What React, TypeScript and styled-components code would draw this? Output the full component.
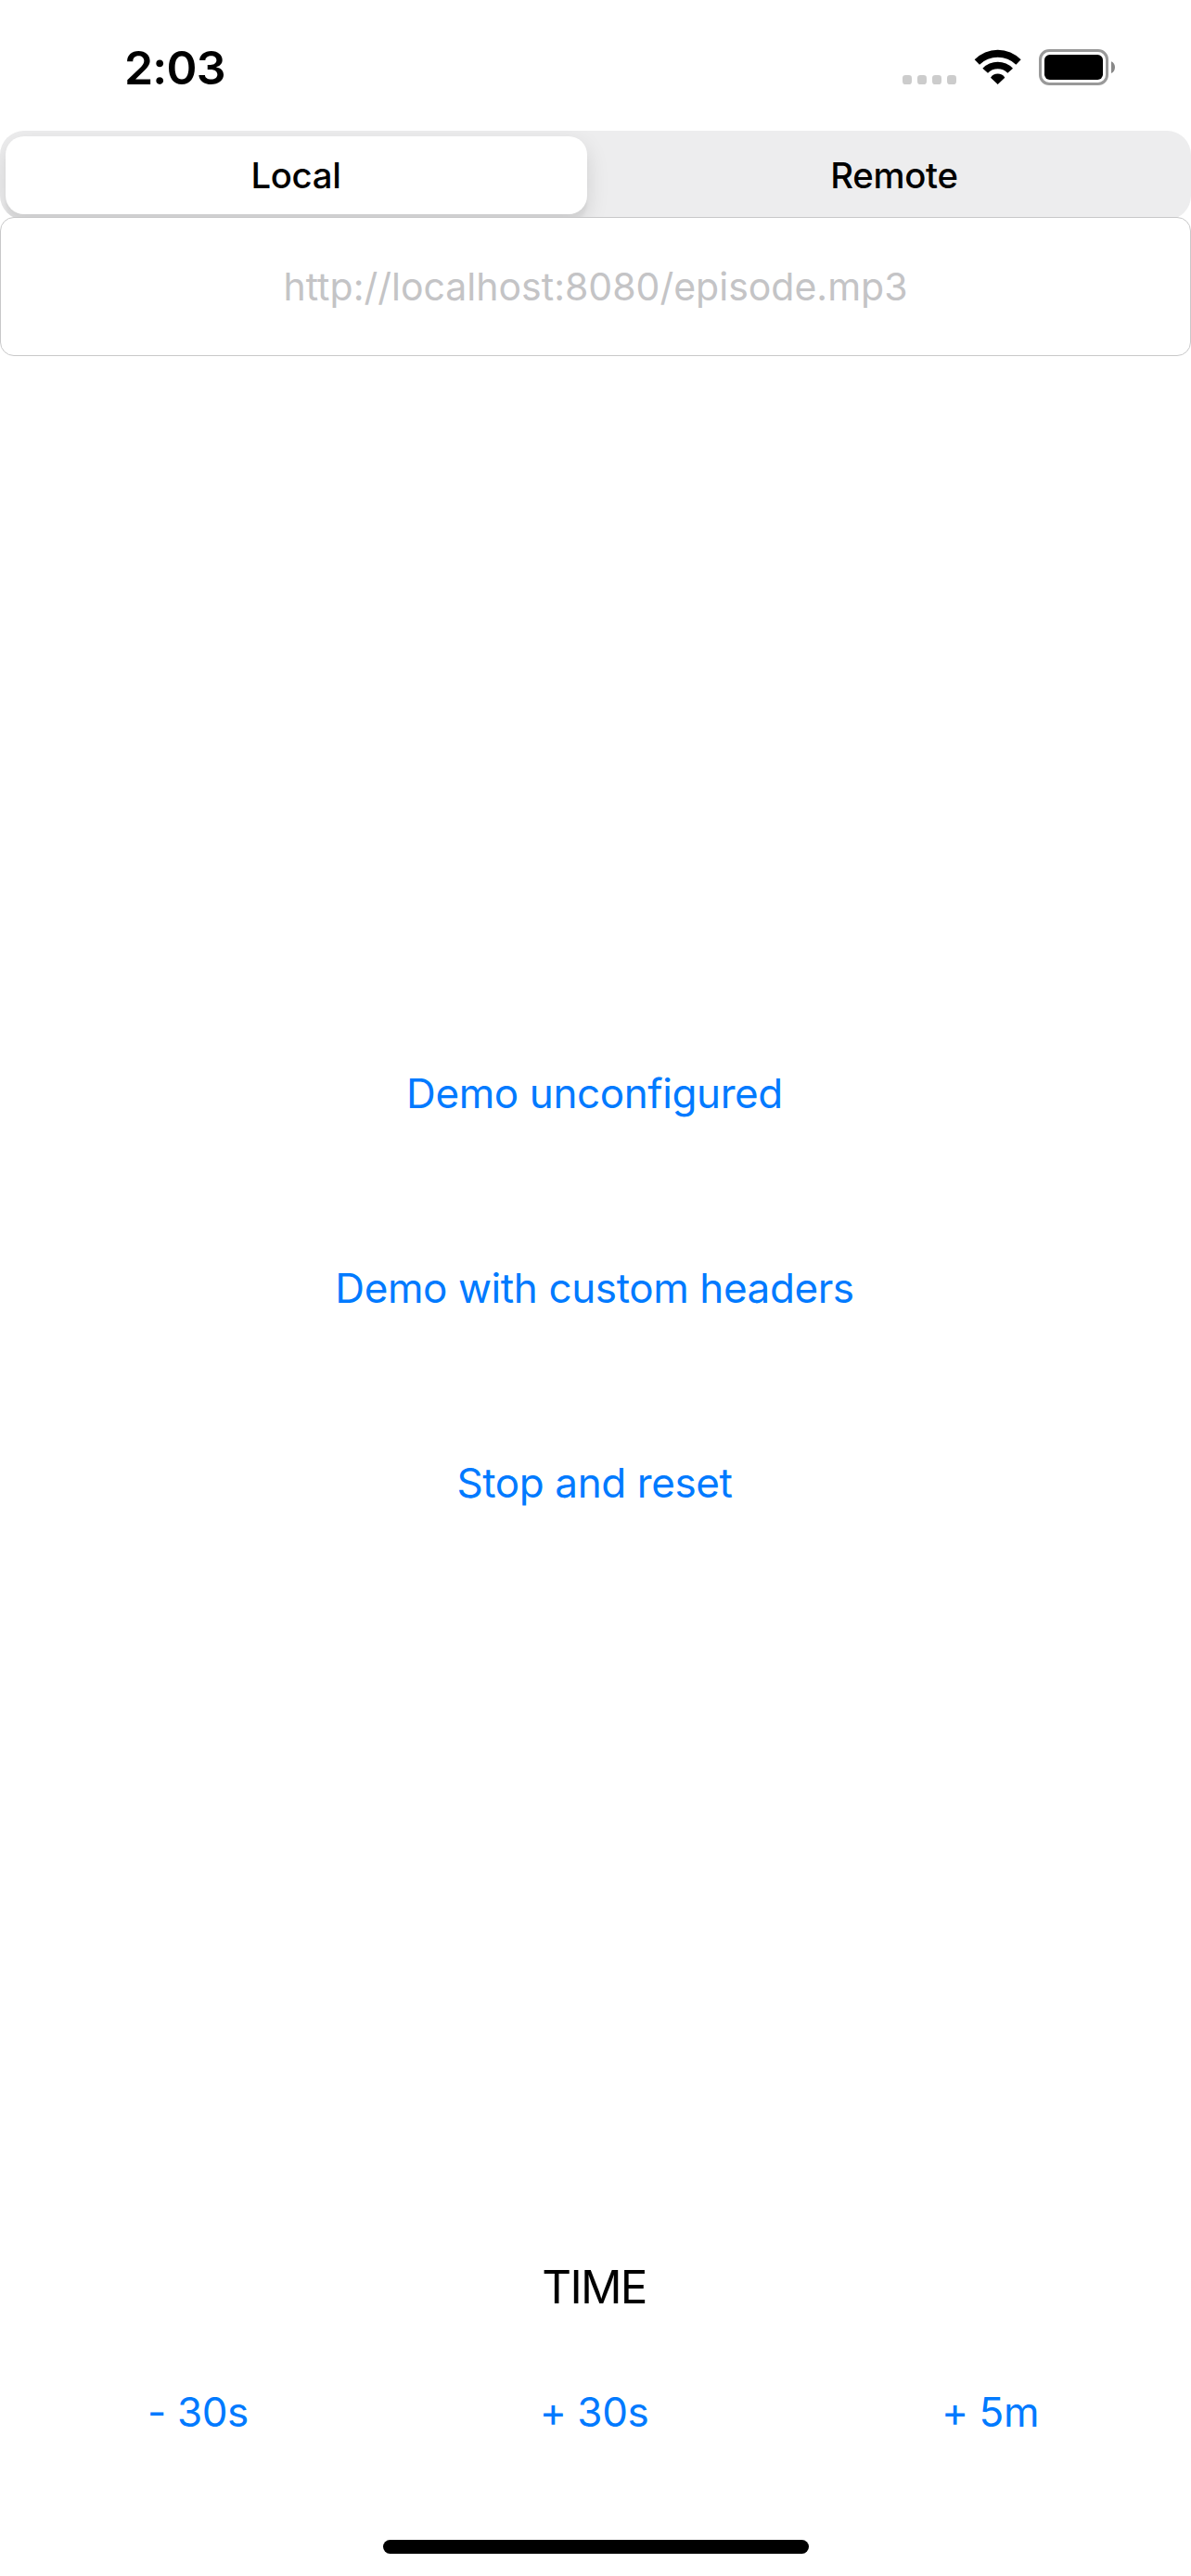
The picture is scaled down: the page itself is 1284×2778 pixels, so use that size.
import React from 'react';
import styled, { createGlobalStyle } from 'styled-components';

const fontStack = 'Inter, "Liberation Sans", sans-serif';

const Global = createGlobalStyle`
  * { box-sizing: border-box; }
  body { margin: 0; background: #fff; font-family: ${fontStack}; }
`;

const Screen = styled.main`
  width: 1284px;
  height: 2778px;
  display: flex;
  flex-direction: column;
  background: #fff;
  overflow: hidden;
`;

const StatusBar = styled.header`
  height: 141px;
  flex: none;
  display: flex;
  justify-content: space-between;
  padding: 0 80px 0 134px;
`;

const Clock = styled.div`
  padding-top: 43px;
  font-size: 50px;
  font-weight: 600;
  line-height: 61px;
  letter-spacing: -0.8px;
`;

const StatusIcons = styled.svg`
  width: 234px;
  height: 45px;
  margin-top: 50px;
`;

const Segments = styled.div`
  height: 96px;
  flex: none;
  display: flex;
  gap: 18px;
  padding: 6px;
  border-radius: 26px;
  background: #ededee;
  overflow: hidden;
`;

const Segment = styled.button<{ $selected?: boolean }>`
  flex: 1;
  padding: 0 1px 0 0;
  border: 0;
  border-radius: 20px;
  background: ${p => (p.$selected ? '#fff' : 'transparent')};
  box-shadow: ${p => (p.$selected ? '0 9px 24px rgba(0,0,0,.12), 0 9px 3px rgba(0,0,0,.04)' : 'none')};
  color: #000;
  font: 500 38.3px ${fontStack};
  letter-spacing: -0.3px;
`;

const UrlField = styled.input`
  position: relative;
  width: 100%;
  height: 150px;
  flex: none;
  margin-top: -3px;
  border: 1px solid #c8c8c9;
  border-radius: 15px;
  background: #fff;
  text-align: center;
  font: 400 41px ${fontStack};
  &::placeholder { color: #c4c4c6; opacity: 1; }
`;

const Actions = styled.section`
  display: flex;
  flex-direction: column;
  align-items: center;
  gap: 110px;
  padding: 745px 2px 0 0;
`;

const TextButton = styled.button`
  height: 100px;
  padding: 0;
  border: 0;
  background: none;
  color: #007aff;
  font: 400 44px ${fontStack};
  letter-spacing: -0.4px;
`;

const Time = styled.div`
  margin-top: auto;
  padding-right: 3px;
  text-align: center;
  font-size: 49.3px;
  line-height: 60px;
  letter-spacing: -1.7px;
`;

const SeekBar = styled.nav`
  display: grid;
  grid-template-columns: repeat(3, 1fr);
  padding: 55px 3px 0 0;
`;

const HomeIndicator = styled.div`
  width: 459px;
  height: 15px;
  flex: none;
  margin: 88px auto 24px;
  border-radius: 8px;
  background: #000;
`;

export default function App() {
  return (
    <>
      <Global />
      <Screen>
        <StatusBar>
          <Clock>2:03</Clock>
          <StatusIcons viewBox="60 60 702 135" aria-hidden="true">
            {[69, 117, 165, 213].map(x => (
              <rect key={x} x={x} y="153" width="30" height="30" rx="10" fill="#ccc" />
            ))}
            <path d="M302 103A104 104 0 0 1 452 103L436 119A85 85 0 0 0 318 119Z" />
            <path d="M328 131A68 68 0 0 1 426 131L409 146A46 46 0 0 0 345 146Z" />
            <path d="M354 161A27 27 0 0 1 400 161L377 183Z" />
            <rect x="514.5" y="73.5" width="216" height="108" rx="29" fill="none" stroke="#999" strokeWidth="9" />
            <rect x="528" y="87" width="189" height="81" rx="17" />
            <path d="M744 109C760 115 760 141 744 147Z" fill="#888" />
          </StatusIcons>
        </StatusBar>
        <Segments>
          <Segment $selected>Local</Segment>
          <Segment>Remote</Segment>
        </Segments>
        <UrlField placeholder="http://localhost:8080/episode.mp3" />
        <Actions>
          <TextButton>Demo unconfigured</TextButton>
          <TextButton>Demo with custom headers</TextButton>
          <TextButton>Stop and reset</TextButton>
        </Actions>
        <Time>TIME</Time>
        <SeekBar>
          <TextButton>- 30s</TextButton>
          <TextButton>+ 30s</TextButton>
          <TextButton>+ 5m</TextButton>
        </SeekBar>
        <HomeIndicator />
      </Screen>
    </>
  );
}
